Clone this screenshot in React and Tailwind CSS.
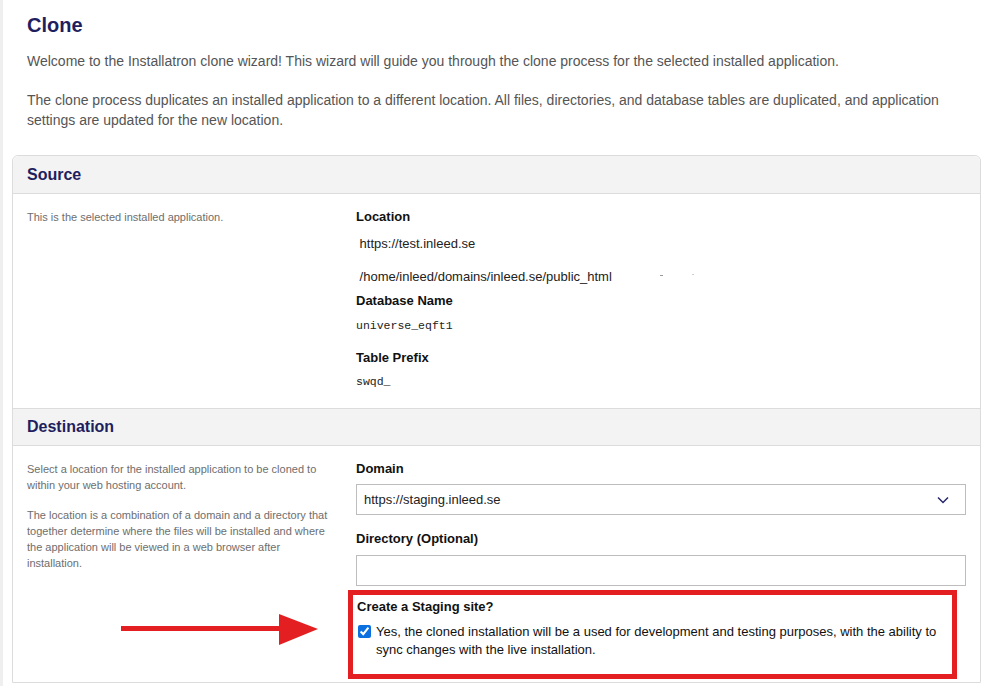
import React from "react";

const font = { fontFamily: '"Liberation Sans", Arial, sans-serif' };

function Label({ children, className = "" }) {
  return <div className={`text-[13px] leading-4 font-bold text-[#111] ${className}`}>{children}</div>;
}

export default function App() {
  return (
    <div className="w-[1005px] h-[686px] overflow-hidden bg-white border-l-[3px] border-[#efefef]" style={font}>
      <div className="pl-[24px] pt-[13px]">
        <h1 className="text-[20px] leading-6 font-bold text-[#1f1f5f]">Clone</h1>
        <p className="mt-[14px] text-[14px] leading-5 text-[#555]">
          Welcome to the Installatron clone wizard! This wizard will guide you through the clone process for the selected installed application.
        </p>
        <p className="mt-[19px] text-[14px] leading-5 text-[#555] w-[940px]">
          The clone process duplicates an installed application to a different location. All files, directories, and database tables are duplicated, and application settings are updated for the new location.
        </p>
      </div>

      <div className="ml-[9px] mt-[25px] w-[969px] border border-[#dcdcdc] rounded-t-[6px]">
        {/* Source header */}
        <div className="h-[38px] bg-[#f3f3f3] border-b border-[#dcdcdc] rounded-t-[6px] flex items-center px-[14px]">
          <h2 className="text-[16px] font-bold text-[#1f1f5f]">Source</h2>
        </div>
        <div className="flex px-[14px] pt-[15px] pb-[18px]">
          <div className="w-[329px] text-[11px] leading-4 text-[#6e6e6e]">This is the selected installed application.</div>
          <div className="flex-1">
            <Label>Location</Label>
            <div className="mt-[11px] text-[13px] leading-4 text-[#222]">&nbsp;https://test.inleed.se</div>
            <div className="mt-[17px] text-[13px] leading-4 text-[#222] flex items-center">
              <span>&nbsp;/home/inleed/domains/inleed.se/public_html</span>
              <span className="ml-[48px] mt-[-4px] w-[3px] h-px bg-[#999]"></span>
              <span className="ml-[29px] mt-[-6px] w-[2px] h-px bg-[#ccc]"></span>
            </div>
            <Label className="mt-[8px]">Database Name</Label>
            <div className="mt-[9px] text-[11.5px] leading-4 text-[#222]" style={{ fontFamily: '"Liberation Mono", "Courier New", monospace' }}>universe_eqft1</div>
            <Label className="mt-[16px]">Table Prefix</Label>
            <div className="mt-[8px] text-[11.5px] leading-4 text-[#222]" style={{ fontFamily: '"Liberation Mono", "Courier New", monospace' }}>swqd_</div>
          </div>
        </div>

        {/* Destination header */}
        <div className="h-[38px] bg-[#f3f3f3] border-t border-b border-[#dcdcdc] flex items-center px-[14px]">
          <h2 className="text-[16px] font-bold text-[#1f1f5f]">Destination</h2>
        </div>
        <div className="relative flex px-[14px] pt-[15px] pb-[3px]">
          <div className="w-[329px] text-[11px] leading-4 text-[#6e6e6e] whitespace-nowrap">
            <p>Select a location for the installed application to be cloned to<br />within your web hosting account.</p>
            <p className="mt-[14px]">The location is a combination of a domain and a directory that<br />together determine where the files will be installed and where<br />the application will be viewed in a web browser after<br />installation.</p>
          </div>
          <div className="w-[610px]">
            <Label>Domain</Label>
            <div className="mt-[7px] h-[31px] border border-[#bdbdbd] flex items-center justify-between pl-[7px] pr-[16px] text-[13px] text-[#222]">
              <span>https://staging.inleed.se</span>
              <svg width="12" height="8" viewBox="0 0 12 8" fill="none">
                <polyline points="1,1.5 6,6.5 11,1.5" stroke="#27276b" strokeWidth="1.5" />
              </svg>
            </div>
            <Label className="mt-[16px]">Directory (Optional)</Label>
            <div className="mt-[8px] h-[31px] border border-[#bdbdbd]"></div>
            <div className="mt-[4px] ml-[-8px] w-[609px] border-[5px] border-[#e41f22] pt-[4px] pl-[4px] pb-[15px]">
              <div className="text-[13px] leading-4 font-bold text-[#111]">Create a Staging site?</div>
              <div className="mt-[8px] flex items-start">
                <input type="checkbox" checked readOnly className="mt-[2px] ml-[1px] w-[13px] h-[13px] accent-[#0b6fe0] shrink-0" />
                <span className="ml-[5px] text-[13px] leading-[18px] text-[#111] whitespace-nowrap">
                  Yes, the cloned installation will be a used for development and testing purposes, with the ability to<br />sync changes with the live installation.
                </span>
              </div>
            </div>
          </div>
          <svg className="absolute left-[108px] top-[167px]" width="200" height="34" viewBox="0 0 200 34">
            <rect x="0" y="13" width="162" height="5" fill="#e41f22" />
            <polygon points="158,1 197,16 158,32" fill="#e41f22" />
          </svg>
        </div>
      </div>
    </div>
  );
}
